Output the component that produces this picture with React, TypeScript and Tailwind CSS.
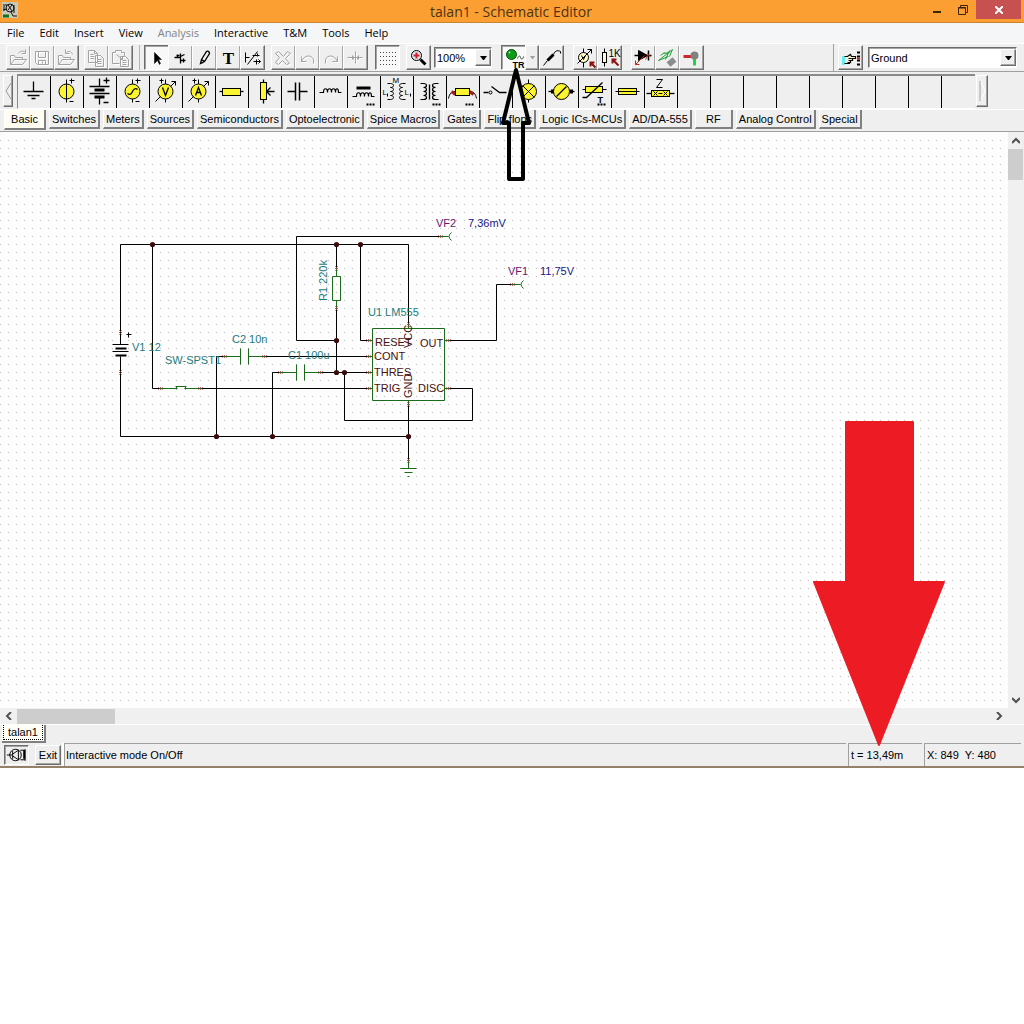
import { useState } from "react";
import { clsx } from "clsx";

const RAISED =
  "border border-t-white border-l-white border-r-[#6d6d6d] border-b-[#6d6d6d] shadow-[inset_-1px_-1px_0_#a5a5a5]";
const SUNKEN =
  "border border-t-[#6d6d6d] border-l-[#6d6d6d] border-r-white border-b-white shadow-[inset_1px_1px_0_#a5a5a5]";

const YELLOW = "#fbf531";

/* ---------- Toolbar icons, drawn on a 24px box ---------- */

const toolIcons: Record<string, React.ReactNode> = {
  Open: (
    <path d="M4 19V10h4l1 2h7v2M4 19l4-5h12l-4 5zM12 8c2-3 5-3 7-1M19 4v4h-4" />
  ),
  Save: <path d="M5 6h13v13H7l-2-2zM8 6v6h7V6M8 19v-4h7v4M12 16v2" />,
  "Open from web": (
    <path d="M4 19V10h4l1 2h7v2M4 19l4-5h12l-4 5zM18 9c-1-3-4-4-6-2M11 4v4h4" />
  ),
  Copy: <path d="M4 5h6l3 3v9H4zM10 5v3h3M6 9h3M6 11h4M6 13h4M11 10h5l3 3v8h-8zM13 14h4M13 16h4M13 18h4" />,
  Paste: <path d="M4 7h3V5h6v2h3v4M4 7v11h7M8 9l6 5M12 14h2v-3M12 11h5l3 3v7h-8zM14 15h4M14 17h4M14 19h4" />,
  Select: (
    <path d="M10 7v11l3-3 2 4 1-1-2-4h3z" fill="#000" strokeWidth="0.5" />
  ),
  Node: <path d="M6 12h6M12 8v10M12 11l4-2M12 15h5M9 9v3M15 13v4M8 10h3" strokeWidth="1.3" />,
  Wire: <path d="M8 18l1-4 5-8c1-1 3 0 3 2l-5 8zM9 14l3 2M8 18l3-1" strokeWidth="1.3" />,
  Text: (
    <text x="12" y="18" textAnchor="middle" fill="#000" stroke="none" className="font-['Liberation_Serif',serif] text-[17px] font-bold">
      T
    </text>
  ),
  Equation: <path d="M5 7v10M5 12h4M7 19L17 6M12 10h7M17 8v3M13 16h7M16 14v5M18 14l2 2-2 2" />,
  Delete: <path d="M7 6l5 5 4-5 3 2-5 5 4 5-3 1-4-4-4 4-3-2 4-5-4-4z" />,
  Undo: <path d="M6 11v5h5M6 16c3-7 10-7 12-2v4" />,
  Redo: <path d="M18 11v5h-5M18 16c-3-7-10-7-12-2v4" />,
  Mirror: <path d="M4 12h15M12 6v12M9 10v4M15 10v4M10 11v3M14 11v3" />,
  Grid: (
    <g fill="#444" stroke="none">
      {[7, 11, 15, 19].map((y) =>
        [5, 8, 11, 14, 17, 20].map((x) => <rect key={`${x}-${y}`} x={x - 0.5} y={y - 0.5} width="1" height="1" />)
      )}
    </g>
  ),
  Zoom: (
    <>
      <circle cx="10" cy="10" r="5" fill="#dfe9f2" />
      <path d="M14 14l5 5" strokeWidth="3" />
      <path d="M10 7v6M7 10h6" stroke="#d2232a" strokeWidth="2" />
    </>
  ),
  "Interactive mode": (
    <>
      <circle cx="10" cy="9" r="5" fill="#0c9b18" stroke="#064d0c" />
      <circle cx="8" cy="7" r="1" fill="#9af09a" stroke="none" />
      <path d="M16 13c1-3 3-3 3-1s3 2 3-1" stroke="#444" />
      <text x="11" y="22" fill="#000" stroke="none" className="text-[9px] font-bold">
        TR
      </text>
    </>
  ),
  Probe: (
    <>
      <path d="M4 20l4-5" />
      <path d="M8 15l6-6" strokeWidth="3" />
      <path d="M14 9c2-5 5-4 7-3v2" />
    </>
  ),
  "Input step": (
    <>
      <circle cx="10" cy="12" r="5" fill="#fffbc8" />
      <path d="M10 3v4M10 17v5M4 18L18 4M14 4h4v4M8 10l2 4 2-4" />
      <path d="M22 22l-5-5M17 21v-4h4" stroke="#8b1010" strokeWidth="2" />
    </>
  ),
  "Resistor step": (
    <>
      <path d="M7 3v18" />
      <rect x="5" y="7" width="4" height="10" fill="#fffbc8" />
      <text x="11" y="11" fill="#000" stroke="none" className="text-[10px]">
        1K
      </text>
      <path d="M21 20l-6-6M15 18v-4h4" stroke="#8b1010" strokeWidth="2" />
    </>
  ),
  "Diode test": (
    <>
      <path d="M3 10h17M17 5v10" strokeWidth="1.5" />
      <path d="M7 5v10l9-5z" fill="#000" />
      <path d="M13 10l-9 9M4 15v4h4M16 8l3 3M14 14l3-5" stroke="#c8281e" />
    </>
  ),
  Transfer: (
    <>
      <path d="M3 15L17 4l-3 7M3 15l10-4M8 8l6-1M10 14l4-9M5 10l4-3" stroke="#1e9e32" />
      <path d="M13 19l6-5" stroke="#8c8c8c" strokeWidth="6" />
    </>
  ),
  "Net test": (
    <>
      <path d="M4 11h10" stroke="#d2232a" strokeWidth="3" />
      <path d="M15 13v7" stroke="#1fd63a" strokeWidth="3" />
      <circle cx="15" cy="10" r="4" fill="#808080" stroke="none" />
    </>
  ),
  Pick: (
    <>
      <path d="M4 11v8h2v-8z" fill="#5ef0f0" stroke="#5ef0f0" />
      <path d="M6 11h3l3-2 1 2h4v2h-4M13 13h1v2h-2v2h-1v1H6" fill="#fdf3c0" strokeWidth="1.2" />
      <path d="M13 13h-3M12 15h-2M11 17H9" />
      <path d="M20 6v14" strokeWidth="3" strokeDasharray="2 2" />
      <path d="M20 12v2" stroke="#d2232a" strokeWidth="3" />
    </>
  ),
};

interface ToolButtonProps {
  name: string;
  disabled?: boolean;
  pressed?: boolean;
  onClick?: () => void;
}

function ToolButton({ name, disabled, pressed, onClick }: ToolButtonProps) {
  return (
    <button
      aria-label={name}
      disabled={disabled}
      onClick={onClick}
      className={clsx("h-[25px] w-[25px] -mr-px shrink-0", pressed ? SUNKEN : RAISED, pressed ? "bg-[#f8f8f8]" : "bg-[#efefef]")}
    >
      <svg
        viewBox="0.5 0.5 23 23"
        fill="none"
        stroke={disabled ? "#a3a3a3" : "#000"}
        className={clsx("h-[23px] w-[23px]", disabled && "drop-shadow-[1px_1px_0_#fff]")}
      >
        {toolIcons[name]}
      </svg>
    </button>
  );
}

function ComboBox({ label, options, className }: { label: string; options: string[]; className: string }) {
  return (
    <div className={clsx("relative h-[21px] bg-white", SUNKEN, className)}>
      <select aria-label={label} className="block h-full w-full appearance-none bg-transparent pl-[2px] text-[11px] outline-none">
        {options.map((o) => (
          <option key={o}>{o}</option>
        ))}
      </select>
      <span className={clsx("pointer-events-none absolute right-0 top-[1px] flex h-[17px] w-4 items-center justify-center bg-[#efefef]", RAISED)}>
        <svg viewBox="0 0 7 4" className="h-1 w-[7px]">
          <path d="M0 0h7L4 4H3z" />
        </svg>
      </span>
    </div>
  );
}

/* ---------- Component palette, drawn on a 33x32 cell ---------- */

function Dots() {
  return <path d="M20 30h2M23 30h2M26 30h2" strokeWidth="2" />;
}

const polarity = <path d="M17 5v23M20 6h5M22 4v5M20 27h4" />;
const coilLeft = "M8 9h3M11 9c4 0 4 4 0 4c4 0 4 4 0 4c4 0 4 4 0 4c4 0 4 4 0 4M11 25H8";
const coilRight = "M26 9h-3M23 9c-4 0-4 4 0 4c-4 0-4 4 0 4c-4 0-4 4 0 4c-4 0-4 4 0 4M23 25h3";

const parts: { name: string; art: React.ReactNode }[] = [
  { name: "Ground", art: <path d="M17 7v10M7 17h20M11 21h12M15 24h4" strokeWidth="1.3" /> },
  { name: "Voltage source", art: <><circle cx="17" cy="17" r="7.5" fill={YELLOW} />{polarity}</> },
  {
    name: "Battery",
    art: (
      <>
        <path d="M17 4v8M17 23v7M7 12h20M7 19h20M21 6h6M24 3v6M21 28h5" strokeWidth="1.3" />
        <path d="M12 15.5h10M12 22.5h10" strokeWidth="3" />
      </>
    ),
  },
  {
    name: "Generator",
    art: <>{polarity}<circle cx="17" cy="17" r="7.5" fill={YELLOW} /><path d="M12 19c3 2 4 0 5-2s3-4 5-2" strokeWidth="1.3" /></>,
  },
  {
    name: "Controlled voltage source",
    art: <><path d="M17 5v23M13 4v5M11 6h4" /><circle cx="17" cy="17" r="7.5" fill={YELLOW} /><path d="M7 27l5-5M22 12l5-5M23 7h4v4" /><path d="M14 13l3 8 3-8" strokeWidth="1.3" /></>,
  },
  {
    name: "Controlled current source",
    art: <><path d="M17 5v23M13 4v5M11 6h4" /><circle cx="17" cy="17" r="7.5" fill={YELLOW} /><path d="M7 27l5-5M22 12l5-5M23 7h4v4" /><path d="M14 21l3-8 3 8M15 18h4" strokeWidth="1.3" /></>,
  },
  { name: "Resistor", art: <><path d="M5 17h24" strokeWidth="1.3" /><rect x="8" y="14" width="18" height="7" fill={YELLOW} /></> },
  { name: "Potentiometer", art: <><path d="M16 5v24M19 17h8M23 13l-4 4 4 4" strokeWidth="1.3" /><rect x="13" y="8" width="6" height="17" fill={YELLOW} /></> },
  { name: "Capacitor", art: <path d="M7 17h8M19 17h8M15 8v18M19 8v18" strokeWidth="1.5" /> },
  { name: "Inductor", art: <path d="M6 18h4c0-5 4-5 4 0c0-5 4-5 4 0c0-5 4-5 4 0c0-5 3-5 3 0h3" strokeWidth="1.2" /> },
  {
    name: "Core inductor",
    art: <><path d="M10 13.5h14" strokeWidth="3" /><path d="M6 22h4c0-5 4-5 4 0c0-5 4-5 4 0c0-5 4-5 4 0c0-5 3-5 3 0h3" strokeWidth="1.2" /><Dots /></>,
  },
  {
    name: "Coupled inductors",
    art: (
      <>
        <path d={coilLeft} />
        <path d={coilRight} />
        <g fill="#000" stroke="none" className="text-[8px]">
          <text x="13" y="8">M</text>
          <text x="3" y="20">L</text>
          <text x="25" y="20">L</text>
        </g>
        <path d="M8 19v3M31 19v3" />
      </>
    ),
  },
  { name: "Transformer", art: <><path d={coilLeft} strokeWidth="1.2" /><path d={coilRight} strokeWidth="1.2" /><path d="M17 10v15" strokeWidth="1.3" /><Dots /></> },
  {
    name: "Jumper",
    art: (
      <>
        <path d="M3 24c1-5 3-7 7-7M31 24c-1-5-3-7-7-7" />
        <path d="M6 17l4 3M24 17l4 3" stroke="#a02020" strokeWidth="3" />
        <rect x="10" y="14" width="14" height="7" fill={YELLOW} />
        <Dots />
      </>
    ),
  },
  { name: "Switch", art: <><circle cx="12" cy="18" r="1.5" /><path d="M5 18h5M13 12l8 6h7" strokeWidth="1.3" /></> },
  { name: "Lamp", art: <><path d="M17 5v23" /><circle cx="17" cy="17" r="8" fill={YELLOW} /><path d="M11 11l12 12M23 11L11 23" /></> },
  {
    name: "Motor",
    art: <><path d="M4 17h26" strokeWidth="1.3" /><path d="M8 15v4M27 15v4" strokeWidth="3" /><circle cx="17" cy="17" r="8" fill={YELLOW} /><path d="M12 22l10-10" strokeWidth="1.3" /></>,
  },
  {
    name: "Thermistor",
    art: (
      <>
        <path d="M5 15h24" />
        <rect x="8" y="12" width="17" height="6" fill={YELLOW} />
        <path d="M5 23h4L25 8" strokeWidth="1.3" />
        <text x="20" y="28" fill="#000" stroke="none" className="text-[9px] font-bold">T</text>
        <Dots />
      </>
    ),
  },
  { name: "Fuse", art: <><rect x="8" y="14" width="18" height="6" fill={YELLOW} /><path d="M5 17h24" /></> },
  {
    name: "Impedance",
    art: (
      <>
        <path d="M3 19h28" strokeWidth="1.3" />
        <rect x="8" y="16" width="18" height="6" fill={YELLOW} />
        <path d="M10 17l4 4M14 17l-4 4M20 17l4 4M24 17l-4 4M15 19h4M13 5h6l-6 8h6" />
      </>
    ),
  },
];

const EMPTY_SLOTS = 9;

const categories = [
  "Basic", "Switches", "Meters", "Sources", "Semiconductors", "Optoelectronic", "Spice Macros",
  "Gates", "Flip-flops", "Logic ICs-MCUs", "AD/DA-555", "RF", "Analog Control", "Special",
];

const menus = ["File", "Edit", "Insert", "View", "Analysis", "Interactive", "T&M", "Tools", "Help"];

/* ---------- Schematic ---------- */

const junctions = [
  [152, 112], [336, 112], [360, 112], [336, 208], [336, 240],
  [344, 240], [216, 304], [272, 304], [408, 304],
];

const pinsH = [
  [160, 256], [200, 256], [224, 224], [264, 224], [280, 240], [320, 240], [368, 208], [368, 224],
  [368, 240], [368, 256], [448, 208], [448, 256], [440, 104], [512, 152],
];

const pinsV = [[120, 200], [120, 240], [336, 136], [336, 176], [408, 192], [408, 272], [408, 328]];

function Schematic() {
  return (
    <svg className="block h-[576px] min-w-0 flex-1 bg-[#fdfdfd] text-[11px]" role="img" aria-label="Schematic">
      <defs>
        <pattern id="grid" width="8" height="8" patternUnits="userSpaceOnUse">
          <rect width="1" height="1" fill="#bdbdbd" />
        </pattern>
      </defs>
      <rect y="8" width="100%" height="562" fill="url(#grid)" />

      <g transform="translate(0.5 0.5)" fill="none">
        {/* Wires */}
        <path
          stroke="#000"
          d="M120 212V112H408V192M120 224V304H408M152 112V256H160M440 104H296V208H336M336 112V136M336 176V240
             M360 112V208H368M216 304V224H224M264 224H368M272 304V240H280M320 240H368M200 256H368
             M344 240V288H472V256H448M448 208H496V152H512M408 272V328"
        />
        {/* Symbols */}
        <path
          stroke="#1a6b1a"
          d="M372 196H444V268H372ZM332 144H340V168H332ZM336 136V144M336 168V176M224 224H240M248 224H264M240 216V232M248 216V232
             M280 240H296M304 240H320M296 232V248M304 232V248M160 256H177M175 254H186M184 256H200M176 254V257M185 254V257
             M368 208H372M368 224H372M368 240H372M368 256H372M444 208H448M444 256H448M408 192V196M408 268V272
             M408 328V336M400 336H416M404 340H412M407 344H409M440 104H448M451 100Q446 104 451 108M512 152H520M523 148Q518 152 523 156"
        />
        <path stroke="#000" d="M112 212H128M112 219H128M126 202H131M128 200V205" />
        <path stroke="#000" strokeWidth="2" d="M115 216H126M115 223H126" />
        <g stroke="#96301f">
          {pinsH.map(([x, y]) => (
            <path key={`${x}-${y}`} d={`M${x - 2} ${y - 1}l2 2M${x - 2} ${y + 1}l2-2M${x} ${y - 1}l2 2M${x} ${y + 1}l2-2`} />
          ))}
          {pinsV.map(([x, y]) => (
            <path key={`${x}-${y}`} d={`M${x - 1} ${y - 2}l2 2M${x + 1} ${y - 2}l-2 2M${x - 1} ${y}l2 2M${x + 1} ${y}l-2 2`} />
          ))}
        </g>
        <g fill="#3a0c0c">
          {junctions.map(([x, y]) => (
            <circle key={`${x}-${y}`} cx={x} cy={y} r="2.6" />
          ))}
        </g>
      </g>

      <g fill="#1c7c80">
        <text x="132" y="219">V1 12</text>
        <text x="165" y="232">SW-SPST1</text>
        <text x="232" y="211">C2 10n</text>
        <text x="288" y="227">C1 100u</text>
        <text x="368" y="184">U1 LM555</text>
        <text transform="translate(327 169) rotate(-90)">R1 220k</text>
      </g>
      <g fill="#4a1010">
        <text x="375" y="214">RESET</text>
        <text x="374" y="228">CONT</text>
        <text x="374" y="244">THRES</text>
        <text x="374" y="260">TRIG</text>
        <text x="420" y="215">OUT</text>
        <text x="418" y="260">DISC</text>
        <text transform="translate(412 216) rotate(-90)">VCC</text>
        <text transform="translate(412 266) rotate(-90)">GND</text>
      </g>
      <g fill="#6c1472">
        <text x="436" y="95">VF2</text>
        <text x="508" y="143">VF1</text>
      </g>
      <g fill="#17178a">
        <text x="468" y="95">7,36mV</text>
        <text x="540" y="143">11,75V</text>
      </g>
    </svg>
  );
}

function Chevron({ d }: { d: string }) {
  return (
    <svg viewBox="0 0 8 8" fill="none" stroke="#505050" strokeWidth="2" className="h-2 w-2">
      <path d={d} />
    </svg>
  );
}

export default function App() {
  const [category, setCategory] = useState("Basic");
  const [interactive, setInteractive] = useState(true);

  return (
    <div className="min-h-screen bg-white">
      <div className="relative overflow-hidden bg-[#efefef] font-['Liberation_Sans',Arial,sans-serif] text-[11px] leading-4 text-black">
        {/* Title bar */}
        <header className="flex h-[23px] items-start border-b border-[#c98432] bg-[#fc9f33]">
          <svg viewBox="0 0 16 16" className="ml-[2px] mt-[2px] h-4 w-4 bg-[#c9c9bb]" fill="none" stroke="#111">
            <circle cx="8" cy="6" r="4" />
            <path d="M1 3h4M1 8l4-1M6 3l4 6M10 3l-4 5M12 3v8M9 10l2 4h4M2 4v5" />
            <path d="M1 14h6" stroke="#157015" strokeWidth="3" />
          </svg>
          <h1 className="flex-1 pl-20 text-center font-['Open_Sans','Noto_Sans',sans-serif] text-sm leading-[23px] text-[#4d3213]">
            talan1 - Schematic Editor
          </h1>
          <button aria-label="Minimize" className="flex h-[19px] w-[26px] items-center justify-center">
            <span className="mt-1 h-[2px] w-2 bg-[#3a2408]" />
          </button>
          <button aria-label="Restore" className="flex h-[19px] w-[26px] items-center justify-center">
            <svg viewBox="0 0 10 10" fill="none" stroke="#3a2408" className="h-[10px] w-[10px]">
              <path d="M.5 2.5h7v7h-7zM2.5 2V.5h7v7H8M0 3h8" />
            </svg>
          </button>
          <button aria-label="Close" className="flex h-[19px] w-[45px] items-center justify-center bg-[#c75050]">
            <svg viewBox="0 0 8 8" stroke="#fff" strokeWidth="2" className="h-2 w-2">
              <path d="M0 0l8 8M8 0L0 8" />
            </svg>
          </button>
          <span className="w-[3px]" />
        </header>

        {/* Menu */}
        <nav className="flex h-5 items-center gap-[15px] bg-[#f5f6f7] px-[7px] font-['Open_Sans','Noto_Sans',sans-serif] text-[11px]">
          {menus.map((m) => (
            <button key={m} disabled={m === "Analysis"} className="disabled:text-[#838383]">
              {m}
            </button>
          ))}
        </nav>

        {/* Toolbar */}
        <div className="flex h-[29px] items-center border-t border-b border-t-white border-b-[#a0a0a0] pl-[6px] pr-[7px]">
          <ToolButton name="Open" disabled />
          <ToolButton name="Save" disabled />
          <ToolButton name="Open from web" disabled />
          <div className="ml-[6px] flex">
            <ToolButton name="Copy" disabled />
            <ToolButton name="Paste" disabled />
          </div>
          <div className="ml-[7px] flex border-l border-[#b5b5b5] pl-1">
            <ToolButton name="Select" pressed />
            <ToolButton name="Node" />
            <ToolButton name="Wire" />
            <ToolButton name="Text" />
            <ToolButton name="Equation" />
          </div>
          <div className="ml-[7px] flex">
            <ToolButton name="Delete" disabled />
            <ToolButton name="Undo" disabled />
            <ToolButton name="Redo" disabled />
            <ToolButton name="Mirror" disabled />
          </div>
          <div className="ml-[8px] flex gap-[7px]">
            <ToolButton name="Grid" pressed />
            <ToolButton name="Zoom" />
          </div>
          <ComboBox label="Zoom level" options={["100%", "50%", "200%"]} className="ml-1 w-[58px]" />
          <div className="ml-[9px] flex">
            <ToolButton name="Interactive mode" pressed={interactive} onClick={() => setInteractive(!interactive)} />
            <button aria-label="Interactive mode options" className={clsx("flex h-[25px] w-[14px] items-center justify-center", RAISED)}>
              <svg viewBox="0 0 5 3" className="h-[3px] w-[5px]" fill="#a0a0a0">
                <path d="M0 0h5L3 3H2z" />
              </svg>
            </button>
            <ToolButton name="Probe" />
          </div>
          <div className="ml-[10px] flex">
            <ToolButton name="Input step" />
            <ToolButton name="Resistor step" />
          </div>
          <div className="ml-[10px] flex">
            <ToolButton name="Diode test" />
            <ToolButton name="Transfer" />
            <ToolButton name="Net test" />
          </div>
          <div className="ml-auto flex h-full items-center gap-[6px] border-l border-[#a0a0a0] pl-1">
            <ToolButton name="Pick" />
            <ComboBox label="Component" options={["Ground", "Battery", "Resistor"]} className="w-[149px]" />
          </div>
        </div>

        {/* Component palette */}
        <div className="mt-[2px] flex h-[35px] gap-1 pl-[3px]">
          <button aria-label="Scroll left" className={clsx("mt-px flex h-8 w-[10px] items-center justify-center", RAISED)}>
            <svg viewBox="0 0 7 18" fill="none" stroke="#9a9a9a" className="h-[18px] w-[7px]">
              <path d="M6 1L1 9l5 8" />
            </svg>
          </button>
          <div className="flex min-w-0 border-b border-l border-t-2 border-[#8a8a8a] border-b-white">
            {parts.map((p) => (
              <button key={p.name} aria-label={p.name} className="h-8 w-[33px] shrink-0 border-r border-black">
                <svg viewBox="1.5 1.5 32 32" fill="none" stroke="#000" className="block h-8 w-8">
                  {p.art}
                </svg>
              </button>
            ))}
            {Array.from({ length: EMPTY_SLOTS }, (_, i) => (
              <span key={i} className="h-8 w-[33px] shrink-0 border-r border-black last:border-transparent" />
            ))}
          </div>
          <button aria-label="Scroll right" className={clsx("-ml-[3px] mt-px flex h-8 w-3 items-center justify-center", RAISED)}>
            <svg viewBox="0 0 7 20" fill="none" stroke="#fff" className="h-5 w-[7px]">
              <path d="M1 0v20" stroke="#a0a0a0" />
              <path d="M2 1l4 9-4 9" />
            </svg>
          </button>
        </div>

        <div role="tablist" className="flex h-[23px] items-start gap-[3px] border-b border-t border-b-[#a0a0a0] border-t-white pl-1">
          {categories.map((c) => (
            <button
              key={c}
              role="tab"
              aria-selected={c === category}
              onClick={() => setCategory(c)}
              className={clsx(
                "shrink-0 whitespace-nowrap border-b-2 border-r-2 border-l border-b-[#808080] border-r-[#808080] border-l-white",
                c === category ? "h-5 w-[42px] bg-[#fffcf2]" : "h-[19px] min-w-[38px] px-[2px] pt-px"
              )}
            >
              {c}
            </button>
          ))}
        </div>

        {/* Drawing area */}
        <main className="flex pr-px">
          <Schematic />
          <div className="flex w-[15px] flex-col items-center bg-[#f0f0f0]">
            <button aria-label="Scroll up" className="flex h-[17px] items-center">
              <Chevron d="M0 6l4-4 4 4" />
            </button>
            <div className="h-[31px] w-full bg-[#cdcdcd]" />
            <button aria-label="Scroll down" className="mt-auto flex h-[17px] items-center">
              <Chevron d="M0 2l4 4 4-4" />
            </button>
          </div>
        </main>
        <div className="flex h-4 items-center bg-[#f0f0f0] pr-[17px]">
          <button aria-label="Scroll left" className="flex w-[17px] justify-center">
            <Chevron d="M6 0L2 4l4 4" />
          </button>
          <div className="h-[15px] w-[98px] bg-[#cdcdcd]" />
          <button aria-label="Scroll right" className="ml-auto flex w-[17px] justify-center">
            <Chevron d="M2 0l4 4-4 4" />
          </button>
        </div>

        {/* Open files */}
        <div className="h-[19px] border-t border-white pl-[2px]">
          <button className="flex h-[18px] w-[44px] border-b-2 border-r-2 border-[#808080] bg-[#fffef6] px-px pb-px">
            <span className="flex-1 border border-t-0 border-dotted border-black leading-[14px]">talan1</span>
          </button>
        </div>

        {/* Status bar */}
        <footer className="flex h-[25px] items-center gap-[2px] border-b-2 border-[#95806a] pl-1 pr-[3px]">
          <button aria-label="Run" className={clsx("h-5 w-[25px]", SUNKEN)}>
            <svg viewBox="0 0 24 18" fill="none" stroke="#000" className="h-[18px] w-[23px]">
              <circle cx="11" cy="9" r="6" />
              <path d="M2 9h6M8 5v8M8 8l6-4M8 10l6 4M14 4v10M16 4h5M21 3v12M16 14h5" />
              <path d="M20 4v9" strokeWidth="2" />
            </svg>
          </button>
          <button className={clsx("ml-[4px] h-5 w-[26px]", RAISED)}>Exit</button>
          <p className="ml-px h-[23px] flex-1 border-l border-t border-[#a0a0a0] pl-px leading-[22px] shadow-[-2px_0_0_#fff]">
            Interactive mode On/Off
          </p>
          <p className="h-[23px] w-[74px] border-l border-t border-[#a0a0a0] pl-[2px] leading-[22px]">t = 13,49m</p>
          <p className="h-[23px] w-[97px] whitespace-pre border-l border-t border-[#a0a0a0] pl-[2px] leading-[22px]">
            {"X: 849  Y: 480"}
          </p>
        </footer>

        {/* Callout arrows */}
        <svg viewBox="0 0 36 118" className="pointer-events-none absolute left-[498px] top-[64px] h-[118px] w-9">
          <path d="M18 6L31 59H25V115H11V59H5Z" fill="none" stroke="#000" strokeWidth="4" strokeLinejoin="round" />
        </svg>
        <svg viewBox="0 0 134 326" className="pointer-events-none absolute right-[78px] top-[421px] h-[326px] w-[134px]">
          <path
            d="M34 1H101V161H132L67 324L2 161H34Z"
            fill="#ed1c24"
            stroke="#ed1c24"
            strokeWidth="2"
            strokeLinejoin="round"
          />
        </svg>
      </div>
    </div>
  );
}
